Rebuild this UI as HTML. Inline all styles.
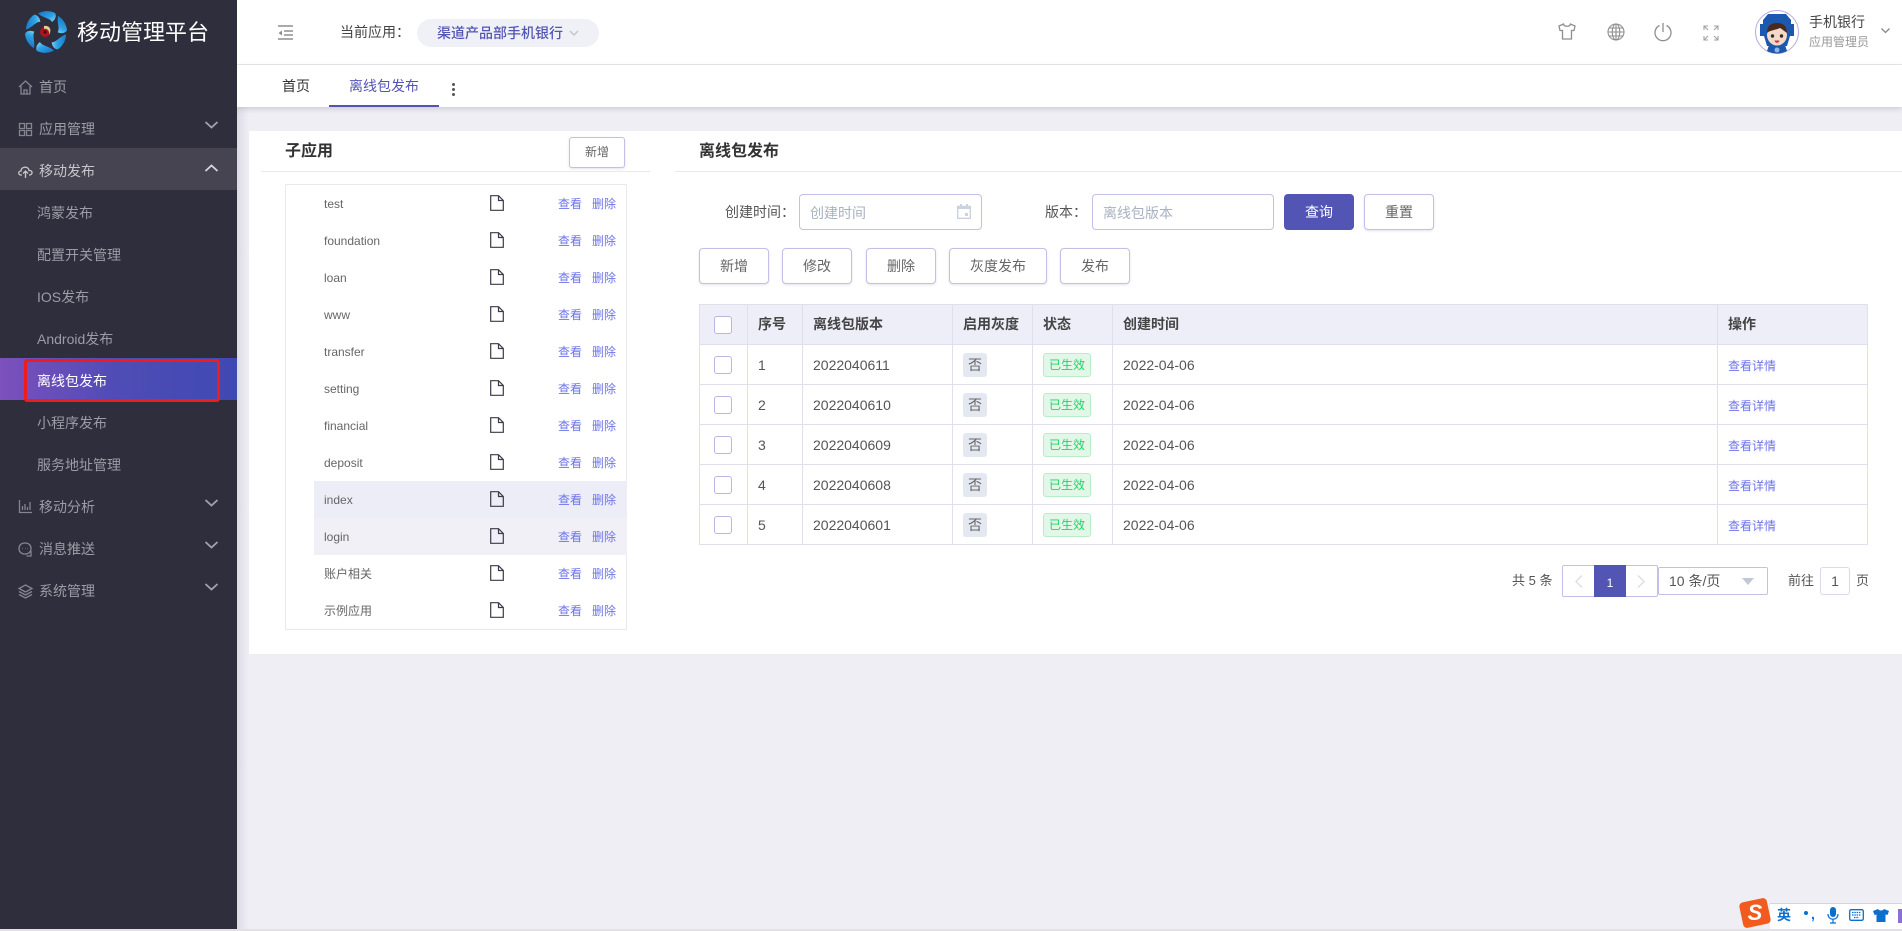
<!DOCTYPE html>
<html lang="zh"><head><meta charset="utf-8"><title>移动管理平台</title>
<style>
*{box-sizing:border-box}
html,body{margin:0;padding:0;width:1902px;height:931px;overflow:hidden;background:#efeef5;font-family:"Liberation Sans","Noto Sans CJK SC",sans-serif;font-size:14px;color:#555}
.a{position:absolute}
.t{position:absolute;white-space:nowrap;line-height:20px}
svg{position:absolute;overflow:visible}
.m{color:#9c9ca6;font-size:14px}
.ic{fill:none;stroke:#85858f;stroke-width:1.3}
.chev{fill:none;stroke:#a3a3ac;stroke-width:1.8}
.btn{position:absolute;top:248px;height:36px;border:1px solid #c2c0e6;border-radius:4px;background:#fff;text-align:center;line-height:34px;color:#666;box-shadow:0 1px 2px rgba(100,100,160,.18)}
.row{position:relative;height:37px}
.row .n{position:absolute;left:38px;top:9px;font-size:12px;line-height:20px;color:#666}
.row svg{left:204px;top:10px}
.row .v,.row .d{position:absolute;top:9px;font-size:12px;line-height:20px;color:#6d74e8}
.row .v{left:272px}.row .d{left:306px}
.hc{position:absolute;top:304px;height:40px;line-height:40px;font-weight:bold;color:#444;white-space:nowrap}
.l{position:absolute;background:#e0e0ec}
.cb{position:absolute;left:714px;width:18px;height:18px;border:1px solid #bab6e2;border-radius:3px;background:#fff}
.c{position:absolute;line-height:20px;white-space:nowrap;color:#555}
.no{position:absolute;left:963px;width:24px;height:24px;background:#e4e8f0;border-radius:3px;text-align:center;line-height:24px;color:#666}
.ok{position:absolute;left:1043px;width:48px;height:24px;background:#e2f7e8;border:1px solid #b5eec8;border-radius:3px;text-align:center;line-height:22px;color:#22d465;font-size:12px}
.lk{position:absolute;left:1728px;line-height:20px;font-size:12px;color:#6d74e8}
</style></head><body>

<!-- sidebar shadow -->
<div class="a" style="left:237px;top:0;width:12px;height:931px;background:linear-gradient(90deg,#dcdce4,#efeef5)"></div>

<!-- main card -->
<div class="a" style="left:249px;top:131px;width:1653px;height:523px;background:#fff"></div>

<!-- header -->
<div class="a" style="left:237px;top:0;width:1665px;height:65px;background:#fff;border-bottom:1px solid #e8e8ec"></div>
<div class="a" style="left:237px;top:65px;width:1665px;height:42px;background:#fff;box-shadow:0 2px 5px rgba(90,90,110,.22)"></div>

<svg style="left:277px;top:24px" width="17" height="17" viewBox="0 0 17 17"><path d="M1 2H16M7 7H16M7 11H16M1 15H16" stroke="#8d8d8d" stroke-width="1.5" fill="none"/><path d="M5 6.500L1.500 9L5 11.500Z" fill="#8d8d8d"/></svg>
<div class="t" style="left:340px;top:22px;color:#444">当前应用：</div>
<div class="a" style="left:417px;top:19px;width:182px;height:28px;background:#f0f0f7;border-radius:14px"></div>
<div class="t" style="left:437px;top:23px;color:#5355b5;font-weight:500">渠道产品部手机银行</div>
<svg style="left:569px;top:30px" width="10" height="7"><path d="M1 1L5 5L9 1" fill="none" stroke="#c2c2cc" stroke-width="1.3"/></svg>

<div class="t" style="left:282px;top:76px;color:#333">首页</div>
<div class="t" style="left:349px;top:76px;color:#5355b5">离线包发布</div>
<div class="a" style="left:329px;top:105px;width:110px;height:2px;background:#5355b5"></div>
<div class="a" style="left:452px;top:83px;width:3px;height:3px;border-radius:50%;background:#555;box-shadow:0 5px 0 #555,0 10px 0 #555"></div>

<!-- top right icons -->
<svg style="left:1558px;top:23px" width="18" height="17" viewBox="0 0 18 17"><path d="M5.500 1L1 3L2 7.500H4.500V16H13.500V7.500H16L17 3L12.500 1C12 4 6 4 5.500 1Z" fill="none" stroke="#8e8e8e" stroke-width="1.300"/></svg>
<svg style="left:1607px;top:23px" width="18" height="18" viewBox="0 0 18 18"><g fill="none" stroke="#8e8e8e" stroke-width="1.100"><circle cx="9" cy="9" r="8"/><ellipse cx="9" cy="9" rx="3.800" ry="8"/><path d="M9 1V17M1 9H17M2 5H16M2 13H16"/></g></svg>
<svg style="left:1654px;top:23px" width="18" height="18" viewBox="0 0 18 18"><path d="M5.500 2.500A8 8 0 1 0 12.500 2.500M9 0V9" fill="none" stroke="#8e8e8e" stroke-width="1.300"/></svg>
<svg style="left:1703px;top:25px" width="16" height="16" viewBox="0 0 16 16"><g fill="none" stroke="#a0a0a0" stroke-width="1.100"><path d="M1 5V1H5M1 1L5 5M15 5V1H11M15 1L11 5M1 11V15H5M1 15L5 11M15 11V15H11M15 15L11 11"/></g></svg>

<svg style="left:1755px;top:10px" width="44" height="44" viewBox="0 0 44 44">
<defs><clipPath id="av"><circle cx="22" cy="22" r="21.500"/></clipPath></defs>
<circle cx="22" cy="22" r="21.500" fill="#fff" stroke="#b5a9dc" stroke-width="1"/>
<g clip-path="url(#av)">
<path d="M13 4H31L36 10V14H39V26H35L32 36H12L9 26H5V14H8V10Z" fill="#1c58ad"/>
<path d="M14 35H30L33 44H11Z" fill="#1c58ad"/>
<ellipse cx="22" cy="25" rx="10" ry="10.500" fill="#f3d9c9"/>
<path d="M12 23C12 15 17 13 22 13C27 13 32 15 32 23C29 21 27 19 25 18C21 20 15 20 12 23Z" fill="#4b2a1c"/>
<circle cx="17.500" cy="26" r="1.700" fill="#3a2a20"/><circle cx="26.500" cy="26" r="1.700" fill="#3a2a20"/>
<path d="M19.500 30.500H24.500C24 33.500 20 33.500 19.500 30.500Z" fill="#d8333a"/>
<circle cx="22" cy="40" r="2.500" fill="#8fb5e8"/>
</g></svg>
<div class="t" style="left:1809px;top:12px;color:#444">手机银行</div>
<div class="t" style="left:1809px;top:32px;color:#999;font-size:12px">应用管理员</div>
<svg style="left:1881px;top:28px" width="9" height="6"><path d="M.5 .5L4.500 4.500L8.500 .5" fill="none" stroke="#888" stroke-width="1.300"/></svg>

<!-- sidebar -->
<div class="a" style="left:0;top:0;width:237px;height:931px;background:#2f2e3c"></div>
<div class="a" style="left:0;top:148px;width:237px;height:42px;background:#454450"></div>
<div class="a" style="left:0;top:358px;width:237px;height:42px;background:linear-gradient(90deg,#7c50bd,#4f4cb5 50%,#3f49b3)"></div>

<svg style="left:26px;top:11px" width="40" height="42" viewBox="0 0 40 42">
<defs><linearGradient id="lg" x1="0" y1="0" x2="1" y2="1"><stop offset="0" stop-color="#1670c2"/><stop offset=".6" stop-color="#2ea2e6"/><stop offset="1" stop-color="#8ddcf8"/></linearGradient></defs>
<g fill="url(#lg)">
<path id="b" d="M12 2.500C17 -.5 24 -.5 29 2C31 5 29 9 26 11C24 7 17 7 12 2.500Z"/>
<use href="#b" transform="rotate(60 20 21)"/><use href="#b" transform="rotate(120 20 21)"/><use href="#b" transform="rotate(180 20 21)"/><use href="#b" transform="rotate(240 20 21)"/><use href="#b" transform="rotate(300 20 21)"/>
</g>
<circle cx="19" cy="21" r="5" fill="#b0121c"/>
<path d="M18 15C24 14 26 19 23 24C24 20 21 17 18 18Z" fill="#e3cf97"/>
<circle cx="19" cy="21" r="1.500" fill="#2a1010"/>
</svg>
<div class="t" style="left:77px;top:18px;font-size:22px;line-height:30px;color:#fff">移动管理平台</div>

<!-- icons -->
<svg class="ic" style="left:18px;top:80px" width="15" height="15" viewBox="0 0 15 15"><path d="M1 7L7.500 1L14 7M3 6V14H12V6M6 14V10H9V14"/></svg>
<svg class="ic" style="left:19px;top:123px" width="13" height="13" viewBox="0 0 13 13"><path d="M.5 .5H5.500V5.500H.5ZM7.500 .5H12.500V5.500H7.500ZM.5 7.500H5.500V12.500H.5ZM7.500 7.500H12.500V12.500H7.500Z"/></svg>
<svg style="left:18px;top:165px;fill:none;stroke:#c6c6cd;stroke-width:1.300" width="15" height="14" viewBox="0 0 15 14"><path d="M4 10H3C0 10 0 6 3 6C3 1 11 1 11 5.500C15 5 15 10 11.500 10H11M7.500 13V6M5 8.500L7.500 6L10 8.500"/></svg>
<svg class="ic" style="left:19px;top:500px" width="13" height="13" viewBox="0 0 13 13"><path d="M.5 0V12.500H13M3.500 10V6M6 10V4M8.500 10V7M11 10V2"/></svg>
<svg class="ic" style="left:18px;top:542px" width="15" height="15" viewBox="0 0 15 15"><path d="M7 1C3 1 1 3.500 1 6.500C1 9.500 3 12 7 12C11 12 13 9.500 13 6.500C13 3.500 11 1 7 1ZM13 9V14H8.500"/><path d="M4.500 6.500H5M7 6.500H7.500M9.500 6.500H10"/></svg>
<svg class="ic" style="left:18px;top:584px" width="15" height="15" viewBox="0 0 15 15"><path d="M7.500 1L14 4.500L7.500 8L1 4.500ZM1 7.500L7.500 11L14 7.500M1 10.500L7.500 14L14 10.500"/></svg>

<div class="t m" style="left:39px;top:77px">首页</div>
<div class="t m" style="left:39px;top:119px">应用管理</div>
<div class="t" style="left:39px;top:161px;color:#c6c6cd">移动发布</div>
<div class="t m" style="left:37px;top:203px">鸿蒙发布</div>
<div class="t m" style="left:37px;top:245px">配置开关管理</div>
<div class="t m" style="left:37px;top:287px">IOS发布</div>
<div class="t m" style="left:37px;top:329px">Android发布</div>
<div class="t" style="left:37px;top:371px;color:#fff">离线包发布</div>
<div class="t m" style="left:37px;top:413px">小程序发布</div>
<div class="t m" style="left:37px;top:455px">服务地址管理</div>
<div class="t m" style="left:39px;top:497px">移动分析</div>
<div class="t m" style="left:39px;top:539px">消息推送</div>
<div class="t m" style="left:39px;top:581px">系统管理</div>

<svg class="chev" style="left:205px;top:121px" width="13" height="8"><path d="M.5 1L6.500 6.500L12.500 1"/></svg>
<svg class="chev" style="left:205px;top:164px;stroke:#d6d6dc" width="13" height="8"><path d="M.5 7L6.500 1.500L12.500 7"/></svg>
<svg class="chev" style="left:205px;top:499px" width="13" height="8"><path d="M.5 1L6.500 6.500L12.500 1"/></svg>
<svg class="chev" style="left:205px;top:541px" width="13" height="8"><path d="M.5 1L6.500 6.500L12.500 1"/></svg>
<svg class="chev" style="left:205px;top:583px" width="13" height="8"><path d="M.5 1L6.500 6.500L12.500 1"/></svg>

<div class="a" style="left:24px;top:359px;width:196px;height:43px;border:3px solid #f01c1c;border-radius:3px"></div>

<!-- left panel -->
<div class="t" style="left:285px;top:142px;font-size:16px;font-weight:bold;color:#333">子应用</div>
<div class="a" style="left:261px;top:171px;width:389px;height:1px;background:#e8e8ee"></div>
<div class="a" style="left:569px;top:137px;width:56px;height:31px;border:1px solid #c2c0e6;border-radius:3px;background:#fff;text-align:center;line-height:29px;font-size:12px;color:#666;box-shadow:0 1px 2px rgba(100,100,160,.18)">新增</div>

<div class="a" style="left:285px;top:184px;width:342px;height:446px;border:1px solid #e8e8ee;background:#fff">
<div class="row"><span class="n">test</span><svg width="14" height="16" viewBox="0 0 14 16"><path d="M.7.7H8.500L13.300 5.500V15.300H.7ZM8.500.7V5.500H13.300" fill="none" stroke="#3a3a4a" stroke-width="1.200"/></svg><span class="v">查看</span><span class="d">删除</span></div>
<div class="row"><span class="n">foundation</span><svg width="14" height="16" viewBox="0 0 14 16"><path d="M.7.7H8.500L13.300 5.500V15.300H.7ZM8.500.7V5.500H13.300" fill="none" stroke="#3a3a4a" stroke-width="1.200"/></svg><span class="v">查看</span><span class="d">删除</span></div>
<div class="row"><span class="n">loan</span><svg width="14" height="16" viewBox="0 0 14 16"><path d="M.7.7H8.500L13.300 5.500V15.300H.7ZM8.500.7V5.500H13.300" fill="none" stroke="#3a3a4a" stroke-width="1.200"/></svg><span class="v">查看</span><span class="d">删除</span></div>
<div class="row"><span class="n">www</span><svg width="14" height="16" viewBox="0 0 14 16"><path d="M.7.7H8.500L13.300 5.500V15.300H.7ZM8.500.7V5.500H13.300" fill="none" stroke="#3a3a4a" stroke-width="1.200"/></svg><span class="v">查看</span><span class="d">删除</span></div>
<div class="row"><span class="n">transfer</span><svg width="14" height="16" viewBox="0 0 14 16"><path d="M.7.7H8.500L13.300 5.500V15.300H.7ZM8.500.7V5.500H13.300" fill="none" stroke="#3a3a4a" stroke-width="1.200"/></svg><span class="v">查看</span><span class="d">删除</span></div>
<div class="row"><span class="n">setting</span><svg width="14" height="16" viewBox="0 0 14 16"><path d="M.7.7H8.500L13.300 5.500V15.300H.7ZM8.500.7V5.500H13.300" fill="none" stroke="#3a3a4a" stroke-width="1.200"/></svg><span class="v">查看</span><span class="d">删除</span></div>
<div class="row"><span class="n">financial</span><svg width="14" height="16" viewBox="0 0 14 16"><path d="M.7.7H8.500L13.300 5.500V15.300H.7ZM8.500.7V5.500H13.300" fill="none" stroke="#3a3a4a" stroke-width="1.200"/></svg><span class="v">查看</span><span class="d">删除</span></div>
<div class="row"><span class="n">deposit</span><svg width="14" height="16" viewBox="0 0 14 16"><path d="M.7.7H8.500L13.300 5.500V15.300H.7ZM8.500.7V5.500H13.300" fill="none" stroke="#3a3a4a" stroke-width="1.200"/></svg><span class="v">查看</span><span class="d">删除</span></div>
<div class="row"><div class="a" style="left:28px;top:0;width:313px;height:37px;background:#ededf8"></div><span class="n">index</span><svg width="14" height="16" viewBox="0 0 14 16"><path d="M.7.7H8.500L13.300 5.500V15.300H.7ZM8.500.7V5.500H13.300" fill="none" stroke="#3a3a4a" stroke-width="1.200"/></svg><span class="v">查看</span><span class="d">删除</span></div>
<div class="row"><div class="a" style="left:28px;top:0;width:313px;height:37px;background:#f0f0f6"></div><span class="n">login</span><svg width="14" height="16" viewBox="0 0 14 16"><path d="M.7.7H8.500L13.300 5.500V15.300H.7ZM8.500.7V5.500H13.300" fill="none" stroke="#3a3a4a" stroke-width="1.200"/></svg><span class="v">查看</span><span class="d">删除</span></div>
<div class="row"><span class="n">账户相关</span><svg width="14" height="16" viewBox="0 0 14 16"><path d="M.7.7H8.500L13.300 5.500V15.300H.7ZM8.500.7V5.500H13.300" fill="none" stroke="#3a3a4a" stroke-width="1.200"/></svg><span class="v">查看</span><span class="d">删除</span></div>
<div class="row"><span class="n">示例应用</span><svg width="14" height="16" viewBox="0 0 14 16"><path d="M.7.7H8.500L13.300 5.500V15.300H.7ZM8.500.7V5.500H13.300" fill="none" stroke="#3a3a4a" stroke-width="1.200"/></svg><span class="v">查看</span><span class="d">删除</span></div>
</div>

<!-- right panel -->
<div class="t" style="left:699px;top:142px;font-size:16px;font-weight:bold;color:#333">离线包发布</div>
<div class="a" style="left:675px;top:171px;width:1227px;height:1px;background:#e8e8ee"></div>

<div class="t" style="left:725px;top:202px;color:#555">创建时间：</div>
<div class="a" style="left:799px;top:194px;width:183px;height:36px;border:1px solid #c2c0e6;border-radius:4px;background:#fff"></div>
<div class="t" style="left:810px;top:203px;color:#aab1c2">创建时间</div>
<svg style="left:957px;top:204px" width="14" height="15" viewBox="0 0 14 15"><path d="M.7 2.500H13.300V14.300H.7Z" fill="none" stroke="#ccd3e0" stroke-width="1.400"/><path d="M.7 2H13.300V5H.7ZM3 0H5V2H3ZM9 0H11V2H9ZM8 9H11V12H8Z" fill="#ccd3e0"/></svg>
<div class="t" style="left:1045px;top:202px;color:#555">版本：</div>
<div class="a" style="left:1092px;top:194px;width:182px;height:36px;border:1px solid #c2c0e6;border-radius:4px;background:#fff"></div>
<div class="t" style="left:1103px;top:203px;color:#aab1c2">离线包版本</div>
<div class="a" style="left:1284px;top:194px;width:70px;height:36px;border-radius:4px;background:#5355b5;color:#fff;text-align:center;line-height:36px">查询</div>
<div class="a" style="left:1364px;top:194px;width:70px;height:36px;border:1px solid #c2c0e6;border-radius:4px;background:#fff;color:#666;text-align:center;line-height:34px;box-shadow:0 1px 2px rgba(100,100,160,.18)">重置</div>

<div class="btn" style="left:699px;width:70px">新增</div>
<div class="btn" style="left:782px;width:70px">修改</div>
<div class="btn" style="left:866px;width:70px">删除</div>
<div class="btn" style="left:949px;width:98px">灰度发布</div>
<div class="btn" style="left:1060px;width:70px">发布</div>

<!-- table -->
<div class="a" style="left:699px;top:304px;width:1169px;height:41px;background:#eeeef9"></div>
<div class="l" style="left:699px;top:304px;width:1169px;height:1px"></div>
<div class="l" style="left:699px;top:344px;width:1169px;height:1px"></div>
<div class="l" style="left:699px;top:384px;width:1169px;height:1px"></div>
<div class="l" style="left:699px;top:424px;width:1169px;height:1px"></div>
<div class="l" style="left:699px;top:464px;width:1169px;height:1px"></div>
<div class="l" style="left:699px;top:504px;width:1169px;height:1px"></div>
<div class="l" style="left:699px;top:544px;width:1169px;height:1px"></div>
<div class="l" style="left:699px;top:304px;width:1px;height:241px"></div>
<div class="l" style="left:747px;top:304px;width:1px;height:241px"></div>
<div class="l" style="left:802px;top:304px;width:1px;height:241px"></div>
<div class="l" style="left:952px;top:304px;width:1px;height:241px"></div>
<div class="l" style="left:1032px;top:304px;width:1px;height:241px"></div>
<div class="l" style="left:1112px;top:304px;width:1px;height:241px"></div>
<div class="l" style="left:1717px;top:304px;width:1px;height:241px"></div>
<div class="l" style="left:1867px;top:304px;width:1px;height:241px"></div>

<div class="hc" style="left:758px">序号</div>
<div class="hc" style="left:813px">离线包版本</div>
<div class="hc" style="left:963px">启用灰度</div>
<div class="hc" style="left:1043px">状态</div>
<div class="hc" style="left:1123px">创建时间</div>
<div class="hc" style="left:1728px">操作</div>

<div class="cb" style="top:316px"></div>
<div class="cb" style="top:356px"></div>
<div class="cb" style="top:396px"></div>
<div class="cb" style="top:436px"></div>
<div class="cb" style="top:476px"></div>
<div class="cb" style="top:516px"></div>

<div class="c" style="left:758px;top:355px">1</div><div class="c" style="left:813px;top:355px">2022040611</div><div class="no" style="top:353px">否</div><div class="ok" style="top:353px">已生效</div><div class="c" style="left:1123px;top:355px">2022-04-06</div><div class="lk" style="top:356px">查看详情</div>
<div class="c" style="left:758px;top:395px">2</div><div class="c" style="left:813px;top:395px">2022040610</div><div class="no" style="top:393px">否</div><div class="ok" style="top:393px">已生效</div><div class="c" style="left:1123px;top:395px">2022-04-06</div><div class="lk" style="top:396px">查看详情</div>
<div class="c" style="left:758px;top:435px">3</div><div class="c" style="left:813px;top:435px">2022040609</div><div class="no" style="top:433px">否</div><div class="ok" style="top:433px">已生效</div><div class="c" style="left:1123px;top:435px">2022-04-06</div><div class="lk" style="top:436px">查看详情</div>
<div class="c" style="left:758px;top:475px">4</div><div class="c" style="left:813px;top:475px">2022040608</div><div class="no" style="top:473px">否</div><div class="ok" style="top:473px">已生效</div><div class="c" style="left:1123px;top:475px">2022-04-06</div><div class="lk" style="top:476px">查看详情</div>
<div class="c" style="left:758px;top:515px">5</div><div class="c" style="left:813px;top:515px">2022040601</div><div class="no" style="top:513px">否</div><div class="ok" style="top:513px">已生效</div><div class="c" style="left:1123px;top:515px">2022-04-06</div><div class="lk" style="top:516px">查看详情</div>

<!-- pagination -->
<div class="t" style="left:1512px;top:571px;font-size:13px;color:#555">共 5 条</div>
<div class="a" style="left:1562px;top:565px;width:96px;height:32px;border:1px solid #c2c0e6;border-radius:2px;background:#fff"></div>
<div class="a" style="left:1594px;top:565px;width:32px;height:32px;background:#5355b5;color:#fff;font-size:12px;text-align:center;line-height:36px">1</div>
<svg style="left:1575px;top:575px" width="8" height="13"><path d="M7 .5L1 6.500L7 12.500" fill="none" stroke="#dcdce2" stroke-width="1.300"/></svg>
<svg style="left:1637px;top:575px" width="8" height="13"><path d="M1 .5L7 6.500L1 12.500" fill="none" stroke="#dcdce2" stroke-width="1.300"/></svg>
<div class="a" style="left:1658px;top:567px;width:110px;height:28px;border:1px solid #c2c0e6;border-radius:2px;background:#fff"></div>
<div class="t" style="left:1669px;top:571px;color:#555">10 条/页</div>
<svg style="left:1742px;top:578px" width="12" height="7"><path d="M0 0H12L6 7Z" fill="#c0c8d8"/></svg>
<div class="t" style="left:1788px;top:571px;font-size:13px;color:#555">前往</div>
<div class="a" style="left:1820px;top:567px;width:30px;height:28px;border:1px solid #d8dce8;border-radius:3px;background:#fff;text-align:center;line-height:26px;color:#555">1</div>
<div class="t" style="left:1856px;top:571px;font-size:13px;color:#555">页</div>

<!-- IME bar -->
<div class="a" style="left:1770px;top:903px;width:132px;height:26px;background:#fff;border-top:1px solid #c5d8ee"></div>
<div class="a" style="left:0;top:929px;width:1902px;height:2px;background:#e2e0e4"></div>
<div class="a" style="left:1741px;top:900px;width:28px;height:26px;background:#f25a1e;border-radius:4px;transform:rotate(-12deg)"></div>
<div class="t" style="left:1743px;top:900px;width:24px;text-align:center;font-size:22px;line-height:26px;font-weight:bold;color:#fff;font-style:italic">S</div>
<div class="t" style="left:1777px;top:905px;font-size:14px;font-weight:bold;color:#0b6fd0">英</div>
<div class="a" style="left:1804px;top:911px;width:4px;height:4px;border-radius:50%;background:#0b6fd0"></div>
<div class="t" style="left:1811px;top:904px;font-size:14px;font-weight:bold;color:#0b6fd0">,</div>
<svg style="left:1827px;top:907px" width="12" height="17" viewBox="0 0 12 17"><rect x="3" y="0" width="6" height="10" rx="3" fill="#0b6fd0"/><path d="M1 7C1 14 11 14 11 7M6 12V16M3 16H9" fill="none" stroke="#0b6fd0" stroke-width="1.200"/></svg>
<svg style="left:1849px;top:909px" width="15" height="12" viewBox="0 0 15 12"><rect x=".7" y=".7" width="13.600" height="10.600" rx="1.500" fill="#fff" stroke="#0b6fd0" stroke-width="1.300"/><path d="M3 3.500H12M3 6H12M5 8.500H10" stroke="#0b6fd0" stroke-width="1.300" stroke-dasharray="1.500 .8"/></svg>
<svg style="left:1873px;top:909px" width="16" height="13" viewBox="0 0 16 13"><path d="M5 0L0 2L1.500 6L3.500 5.500V13H12.500V5.500L14.500 6L16 2L11 0C10 2 6 2 5 0Z" fill="#0b6fd0"/></svg>
<div class="a" style="left:1898px;top:909px;width:4px;height:14px;background:#8b6fd8"></div>

</body></html>
